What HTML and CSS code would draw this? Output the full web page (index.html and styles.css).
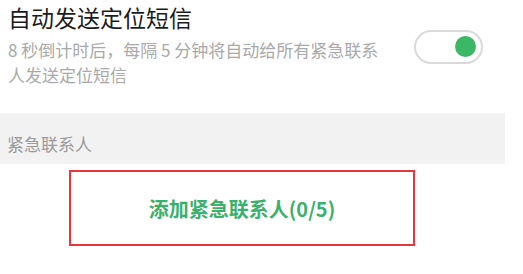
FILE: index.html
```html
<!DOCTYPE html>
<html lang="zh-CN">
<head>
<meta charset="utf-8">
<link rel="stylesheet" href="styles.css">
</head>
<body>
<div class="page">
  <div class="setting">
    <div class="setting-text">
      <div class="setting-title">自动发送定位短信</div>
      <div class="setting-desc">8 秒倒计时后，每隔 5 分钟将自动给所有紧急联系人发送定位短信</div>
    </div>
    <div class="toggle"><span class="knob"></span></div>
  </div>
  <div class="section-header">紧急联系人</div>
  <div class="add-wrap">
    <div class="add-box">添加紧急联系人(0/5)</div>
  </div>
</div>
</body>
</html>
```
FILE: styles.css
```css
html, body {
  margin: 0;
  padding: 0;
  background: #ffffff;
}
body {
  font-family: "Noto Sans CJK SC", "Noto Sans", sans-serif;
}
.page {
  width: 505px;
}
.setting {
  display: flex;
  align-items: center;
  justify-content: space-between;
  padding: 2px 22px 0 8px;
}
.setting-text {
  width: 386px;
}
.setting-title {
  font-size: 23px;
  line-height: 30px;
  color: #1c1c1c;
}
.setting-desc {
  margin-top: 5px;
  font-size: 17px;
  line-height: 25px;
  color: #a9a9a9;
}
.toggle {
  box-sizing: border-box;
  width: 69px;
  height: 34px;
  border: 2px solid #dadada;
  border-radius: 17px;
  display: flex;
  align-items: center;
  justify-content: flex-end;
  padding-right: 5px;
  margin-top: 4px;
}
.knob {
  width: 21px;
  height: 21px;
  border-radius: 50%;
  background: #3bb865;
}
.section-header {
  margin-top: 26px;
  background: #f2f2f2;
  height: 51px;
  box-sizing: border-box;
  padding: 18px 0 0 7px;
  font-size: 17px;
  line-height: 25px;
  color: #9a9a9a;
}
.add-wrap {
  padding: 6px 0 0 69px;
}
.add-box {
  box-sizing: border-box;
  width: 346px;
  height: 76px;
  border: 2px solid #e8373c;
  display: flex;
  align-items: center;
  justify-content: center;
  font-size: 20px;
  font-weight: bold;
  color: #3bb06a;
}
```
